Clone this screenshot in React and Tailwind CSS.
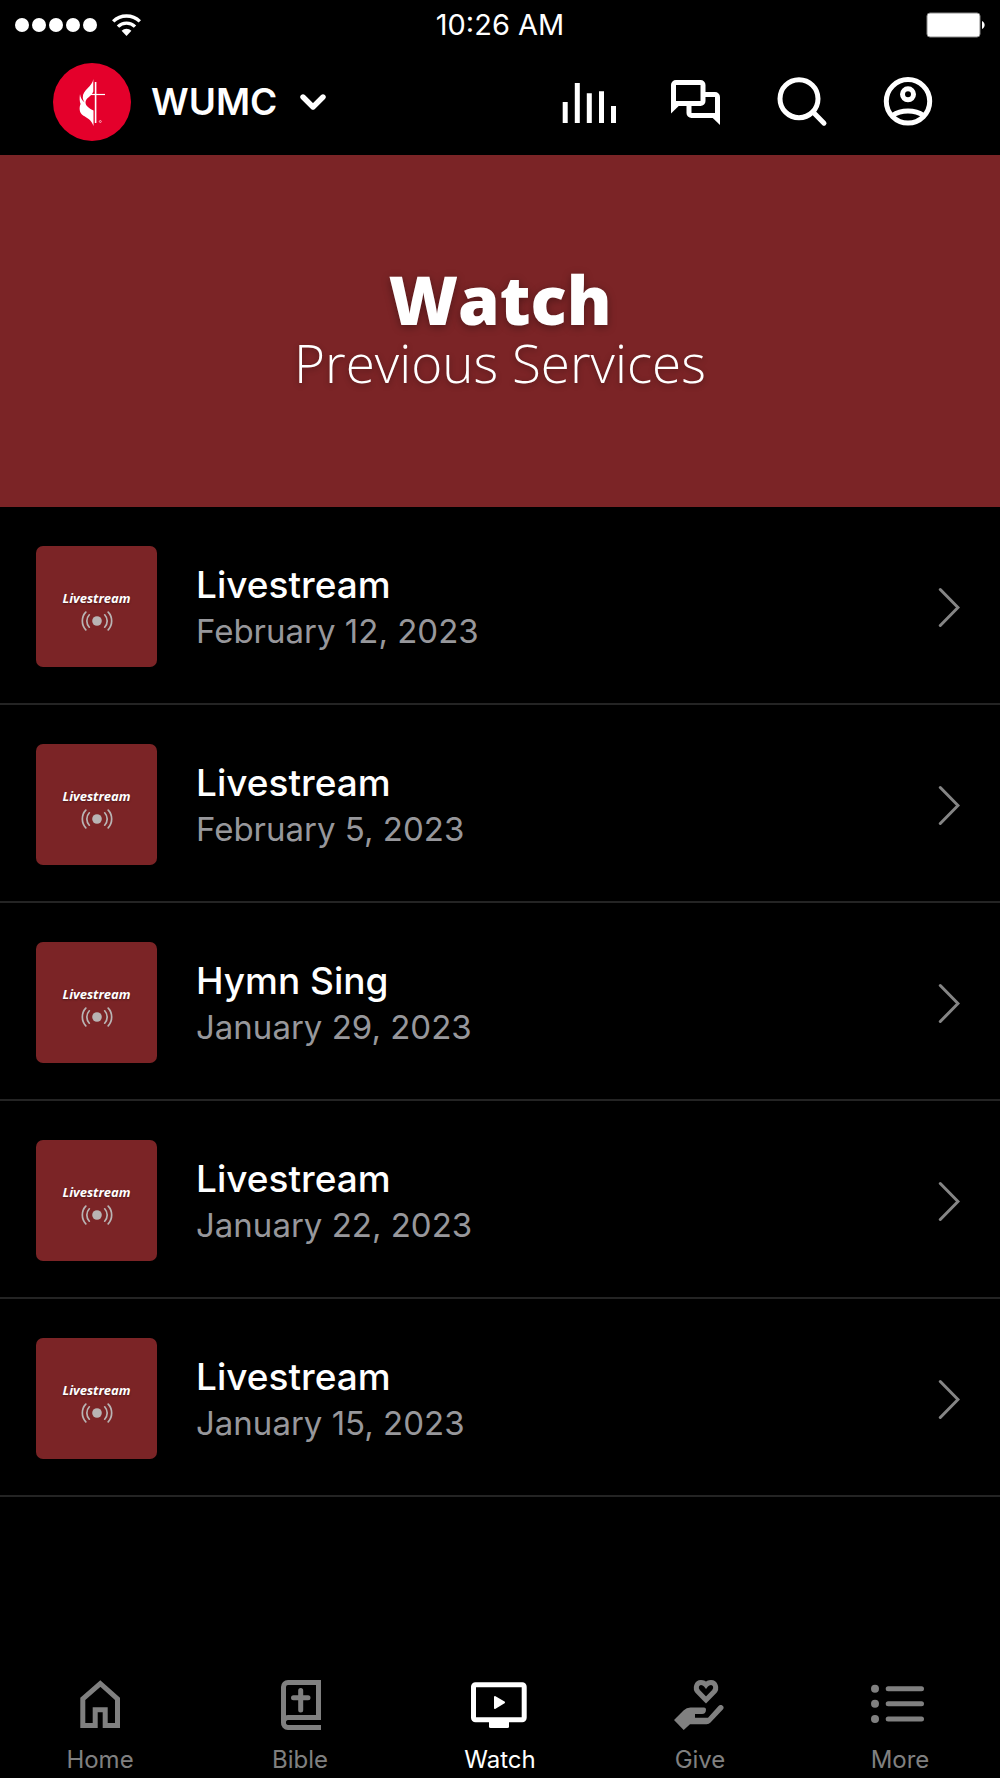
import clsx from "clsx";

const services = [
  { id: 1, title: "Livestream", date: "February 12, 2023" },
  { id: 2, title: "Livestream", date: "February 5, 2023" },
  { id: 3, title: "Hymn Sing", date: "January 29, 2023" },
  { id: 4, title: "Livestream", date: "January 22, 2023" },
  { id: 5, title: "Livestream", date: "January 15, 2023" },
];

const tabs = [
  { label: "Home", Icon: HomeIcon },
  { label: "Bible", Icon: BibleIcon },
  { label: "Watch", Icon: WatchIcon },
  { label: "Give", Icon: GiveIcon },
  { label: "More", Icon: MoreIcon },
];

const actions = [
  { label: "Audio", Icon: AudioIcon },
  { label: "Messages", Icon: MessagesIcon },
  { label: "Search", Icon: SearchIcon },
  { label: "Profile", Icon: ProfileIcon },
];

export default function App() {
  return (
    <div className="flex min-h-screen flex-col bg-black font-['Inter',sans-serif] text-white">
      <StatusBar />
      <Header />
      <main className="flex-1">
        <Hero />
        <ul>
          {services.map((service) => (
            <ServiceRow key={service.id} service={service} />
          ))}
        </ul>
      </main>
      <TabBar active="Watch" />
    </div>
  );
}

function StatusBar() {
  return (
    <div className="grid h-[50px] grid-cols-3 items-center px-[15px]">
      <div className="flex items-center gap-[15px]">
        <div className="flex gap-[3px]">
          {[0, 1, 2, 3, 4].map((dot) => (
            <span key={dot} className="size-[14px] rounded-full bg-white" />
          ))}
        </div>
        <svg className="h-[22px] w-[29px]" viewBox="0 0 29 22" fill="none" stroke="white" strokeWidth="3.4">
          <path d="M1.2 7.4a19 19 0 0 1 26.6 0" />
          <path d="M6 12.6a12.2 12.2 0 0 1 17 0" />
          <path d="M9.6 16.8a7 7 0 0 1 9.8 0L14.5 22z" fill="white" stroke="none" />
        </svg>
      </div>
      <time className="text-center text-[29px] leading-9">10:26 AM</time>
      <svg className="h-[26px] w-[59px] justify-self-end" viewBox="0 0 59 26">
        <rect x="1" y="1" width="53" height="24" rx="3" fill="white" stroke="#8a8a8a" />
        <path d="M56 9c3.500 1.500 3.500 6.500 0 8z" fill="white" />
      </svg>
    </div>
  );
}

function Header() {
  return (
    <header className="flex h-[105px] items-center justify-between pb-px pl-[53px] pr-16">
      <button type="button" className="flex items-center">
        <LogoIcon />
        <span className="ml-5 text-[37px] font-semibold leading-[46px]">WUMC</span>
        <svg
          className="ml-[22px] h-4 w-7"
          viewBox="0 0 28 16"
          fill="none"
          stroke="white"
          strokeWidth="5.4"
          strokeLinecap="round"
          strokeLinejoin="round"
        >
          <path d="M4 3l10 10L24 3" />
        </svg>
      </button>
      <div className="flex gap-[50px] pb-0.5">
        {actions.map(({ label, Icon }) => (
          <button key={label} type="button" aria-label={label}>
            <Icon />
          </button>
        ))}
      </div>
    </header>
  );
}

function Hero() {
  return (
    <section className="flex h-[352px] flex-col items-center justify-center bg-[#7b2426] pb-1 font-['Open_Sans',sans-serif]">
      <h1 className="text-[67px] font-extrabold leading-[68px] [text-shadow:0_2px_8px_rgba(0,0,0,0.35)]">Watch</h1>
      <p className="text-[53px] font-light leading-[60px] [text-shadow:0_2px_6px_rgba(0,0,0,0.3)]">
        Previous Services
      </p>
    </section>
  );
}

function ServiceRow({ service }) {
  return (
    <li className="border-b-2 border-[#242424]">
      <a href="#" className="flex items-center pb-9 pl-9 pr-10 pt-[39px]">
        <div className="flex size-[121px] flex-col items-center justify-center gap-[5px] rounded-[7px] bg-[#7b2426] pt-2">
          <span className="font-['Open_Sans',sans-serif] text-[13px] font-bold italic leading-4 [text-shadow:0_1px_2px_rgba(0,0,0,0.4)]">
            Livestream
          </span>
          <BroadcastIcon />
        </div>
        <div className="ml-[39px] flex-1 pt-0.5">
          <p className="text-[37px] font-medium leading-[47px]">{service.title}</p>
          <p className="text-[33px] leading-[47px] text-[#97979b]">{service.date}</p>
        </div>
        <svg
          className="h-10 w-[22px]"
          viewBox="0 0 22 40"
          fill="none"
          stroke="#858585"
          strokeWidth="3"
          strokeLinecap="round"
        >
          <path d="M2.3 2.5L20 20.5L2.3 38.5" />
        </svg>
      </a>
    </li>
  );
}

function TabBar({ active }) {
  return (
    <nav className="grid grid-cols-5 pb-0.5">
      {tabs.map(({ label, Icon }) => (
        <a
          key={label}
          href="#"
          className={clsx("flex flex-col items-center gap-3", label === active ? "text-white" : "text-[#808080]")}
        >
          <Icon />
          <span className="text-[24px] leading-8">{label}</span>
        </a>
      ))}
    </nav>
  );
}

// Icons

function Glyph({ children, ...props }) {
  return (
    <svg
      className="size-14 overflow-visible"
      viewBox="0 0 56 56"
      fill="none"
      stroke="currentColor"
      strokeWidth="5"
      {...props}
    >
      {children}
    </svg>
  );
}

function LogoIcon() {
  return (
    <svg className="size-[78px]" viewBox="0 0 78 78">
      <circle cx="39" cy="39" r="39" fill="#e4002b" />
      <path
        d="M40.300 16C39.500 23.500 29.500 27 29.800 34.500c.1 2 .9 3.600 2 5-2.700-1.800-4.300-4.500-4.800-8.500-.6 4-.4 7.500.6 10-.8 1.800-1.100 3.600-.9 5.800C27.300 54.500 37.500 53 40.500 63V47.500C36.500 45.500 32.500 43 32.500 39.500c0-4.500 6-6 7.800-11z"
        fill="white"
      />
      <path d="M42.600 19v41" stroke="white" strokeWidth="1.6" />
      <path d="M32 31.500h20" stroke="white" strokeWidth="1.2" />
      <circle cx="47.300" cy="58.500" r="1" fill="none" stroke="white" strokeWidth=".6" />
    </svg>
  );
}

function AudioIcon() {
  return (
    <Glyph>
      <path d="M3.200 29v21M15.300 10v40M27.300 20.300V50M39.500 18.300V50M51.500 33v17" />
    </Glyph>
  );
}

function MessagesIcon() {
  return (
    <Glyph>
      <path d="M8 9.500h24.500a2.500 2.500 0 0 1 2.500 2.500v16a2.500 2.500 0 0 1-2.500 2.500h-27V12A2.500 2.500 0 0 1 8 9.500z" />
      <path d="M3 30v10.500L10.700 33z" fill="currentColor" stroke="none" />
      <path d="M35 21.500h12a2.500 2.500 0 0 1 2.500 2.500v18.500H23.500a2.500 2.500 0 0 1-2.500-2.500v-8" />
      <path d="M52 42v10L44.700 45z" fill="currentColor" stroke="none" />
    </Glyph>
  );
}

function SearchIcon() {
  return (
    <Glyph strokeLinecap="round">
      <circle cx="25" cy="25.700" r="19" />
      <path d="M39.500 39.500l10.500 10.700" />
    </Glyph>
  );
}

function ProfileIcon() {
  return (
    <Glyph>
      <circle cx="28" cy="28.300" r="21.700" />
      <circle cx="28" cy="21.300" r="5.500" />
      <path d="M12.500 42.500C21 36.500 35 36.500 43.500 42.500" />
    </Glyph>
  );
}

function BroadcastIcon() {
  return (
    <svg className="h-5 w-8" viewBox="0 0 32 20" fill="none" stroke="#b9b4b4" strokeWidth="1.7" strokeLinecap="round">
      <circle cx="16" cy="10" r="4.800" fill="#b9b4b4" stroke="none" />
      <path d="M4.800 1.200C.2 6 .2 14 4.800 18.800M8.300 3.800c-3.300 3.600-3.300 8.800 0 12.400" />
      <path d="M27.200 1.200c4.600 4.800 4.600 12.800 0 17.600M23.700 3.800c3.300 3.600 3.300 8.800 0 12.400" />
    </svg>
  );
}

function HomeIcon() {
  return (
    <Glyph>
      <path d="M28.300 7.500L45.500 22.800V49.500H33.200V33.800H23.200V49.500H10.800V22.800z" />
    </Glyph>
  );
}

function BibleIcon() {
  return (
    <Glyph>
      <path d="M49 51.500H16a4.500 4.500 0 0 1-4.500-5V11A4.500 4.500 0 0 1 16 6.500h30.500v35H16a4.500 4.500 0 0 0-4.500 5" />
      <path d="M28.700 14.500v19.500M21.500 21.700h14.500" strokeLinecap="round" />
    </Glyph>
  );
}

function WatchIcon() {
  return (
    <Glyph>
      <rect x="1.500" y="8.800" width="50.700" height="35" rx="2" />
      <path d="M17 45h20v5.500a1.500 1.500 0 0 1-1.500 1.500h-17a1.500 1.500 0 0 1-1.500-1.500z" fill="currentColor" stroke="none" />
      <path d="M23 21l9 5.400-9 5.600z" fill="currentColor" strokeWidth="2" strokeLinejoin="round" />
    </Glyph>
  );
}

function GiveIcon() {
  return (
    <Glyph>
      <path d="M34 24L26 15.800C22.500 12 24.800 6.500 29 6.500c2.200 0 3.800 1 5 2.500 1.200-1.500 2.800-2.500 5-2.500 4.200 0 6.500 5.500 3 9.300z" />
      <path
        d="M2 44L11.500 34.500Q14.500 31.500 18.500 31.500H32Q34 31.500 34 33.500C34 36.500 32.500 38 30 38H23V41.700H36L46.300 30.200C49 27 53.500 30.500 50.800 33.500L38.500 46.500Q37 48.300 34.500 48.300H18L11.700 54z"
        fill="currentColor"
        stroke="none"
      />
    </Glyph>
  );
}

function MoreIcon() {
  return (
    <Glyph strokeLinecap="round">
      <path d="M16.200 12.700h33.300M16.200 27.700h33.300M16.200 42.900h33.300" />
      <g fill="currentColor" stroke="none">
        <circle cx="3" cy="12.700" r="4" />
        <circle cx="3" cy="27.700" r="4" />
        <circle cx="3" cy="42.900" r="4" />
      </g>
    </Glyph>
  );
}
